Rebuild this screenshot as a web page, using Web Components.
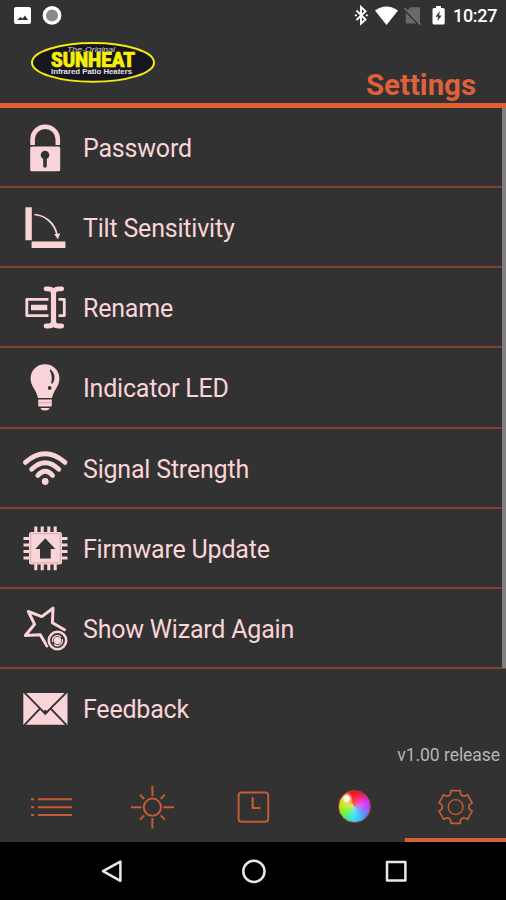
<!DOCTYPE html>
<html lang="en">
<head>
<meta charset="utf-8">
<title>Settings</title>
<style>
  body {
    margin: 0;
    background: #323232;
    font-family: Roboto, sans-serif;
  }
</style>
</head>
<body>
<settings-app></settings-app>

<script>
class StatusBar extends HTMLElement {
  constructor() {
    super();
    this.attachShadow({ mode: "open" });
  }

  connectedCallback() {
    this.shadowRoot.innerHTML = `
      <style>
        :host {
          display: flex;
          justify-content: space-between;
          height: 32px;
          color: #fff;
        }
        .right { display: flex; }
        .time {
          box-sizing: border-box;
          width: 53px;
          padding-top: 5px;
          font-size: 18px;
          line-height: 22px;
          font-weight: 500;
          letter-spacing: -.3px;
        }
        svg { display: block; }
      </style>
      <svg width="80" height="32">
        <path fill="#fff" fill-rule="evenodd" d="M16 7H29Q31 7 31 9V22Q31 24 29 24H16Q14 24 14 22V9Q14 7 16 7ZM17 20H28L25 15.5L22.6 18.6L20.5 17Z"/>
        <circle cx="52" cy="15.4" r="7.7" fill="#8a8a8a" stroke="#fff" stroke-width="3.4"/>
      </svg>
      <div class="right">
        <svg width="103" height="32" viewBox="350 0 103 32">
          <path d="M356.5 10.5L365.5 19.5L361 23.6V7L365.5 11.2L356.5 20" fill="none" stroke="#fff" stroke-width="1.9"/>
          <path d="M354.8 15.3h2.2M365.8 15.3h2" stroke="#fff" stroke-width="1.8"/>
          <path d="M375 10.6Q386.3 2.2 398 10.6L386.5 25Z" fill="#fff"/>
          <path d="M420 7.3V23L407.5 10.5L410.5 7.3ZM405.8 12.8L416.5 23.5H405.8Z" fill="#696969"/>
          <path d="M404.5 8L420.5 24.5" stroke="#777" stroke-width="1.4"/>
          <path d="M436 6H441V8H443.2Q444.7 8 444.7 9.5V23Q444.7 24.5 443.2 24.5H434Q432.5 24.5 432.5 23V9.5Q432.5 8 434 8H436Z" fill="#fff"/>
          <path d="M440 11L435.5 16.7H438.2L437.3 21L441.8 15.4H439Z" fill="#333"/>
        </svg>
        <div class="time">10:27</div>
      </div>
    `;
  }
}

class AppHeader extends HTMLElement {
  constructor() {
    super();
    this.attachShadow({ mode: "open" });
  }

  connectedCallback() {
    this.shadowRoot.innerHTML = `
      <style>
        :host {
          display: flex;
          justify-content: space-between;
          box-sizing: border-box;
          height: 76px;
          padding: 0 30px 0 28px;
          border-bottom: 5px solid #e2602f;
        }
        svg {
          display: block;
          margin-top: 7px;
        }
        h1 {
          margin: 36px 0 0;
          color: #df6039;
          font-size: 29.4px;
          line-height: 34px;
          font-weight: 700;
        }
      </style>
      <svg width="130" height="46" viewBox="28 39 130 46">
        <ellipse cx="93" cy="62.4" rx="61" ry="19.4" fill="#171520" stroke="#f2ea12" stroke-width="2"/>
        <text x="67" y="52.4" textLength="48" lengthAdjust="spacingAndGlyphs" fill="#d0d0d0" font-family="Liberation Sans" font-style="italic" font-size="7.5">The-Original</text>
        <text x="51" y="67.2" textLength="84" lengthAdjust="spacingAndGlyphs" fill="#f7ef08" stroke="#f7ef08" stroke-width=".7" font-family="Roboto" font-weight="900" font-size="19.5">SUNHEAT</text>
        <text x="51" y="74" textLength="81" lengthAdjust="spacingAndGlyphs" fill="#e4e4e4" font-family="Liberation Sans" font-weight="700" font-size="7.6">Infrared Patio Heaters</text>
      </svg>
      <h1><slot></slot></h1>
    `;
  }
}

class SettingsRow extends HTMLElement {
  constructor() {
    super();
    this.attachShadow({ mode: "open" });
  }

  connectedCallback() {
    this.shadowRoot.innerHTML = `
      <style>
        :host {
          display: flex;
          align-items: center;
          gap: 14px;
          box-sizing: border-box;
          height: 80.15px;
          padding: 2px 0 0 21px;
          border-bottom: 2px solid #80432f;
          color: #fad4d8;
          font-size: 25px;
          line-height: 30px;
          letter-spacing: -.2px;
        }
        :host([last]) { border-color: transparent; }
        span { padding-top: 2px; }
        ::slotted(svg) {
          display: block;
          flex: none;
          width: 48px;
          height: 48px;
          overflow: visible;
        }
      </style>
      <slot name="icon"></slot>
      <span><slot></slot></span>
    `;
  }
}

class NavTab extends HTMLElement {
  constructor() {
    super();
    this.attachShadow({ mode: "open" });
  }

  connectedCallback() {
    this.shadowRoot.innerHTML = `
      <style>
        :host {
          display: flex;
          justify-content: center;
          box-sizing: border-box;
          flex: 1;
          padding-top: 11px;
          border-bottom: 4px solid transparent;
        }
        :host([active]) { border-color: #d95f38; }
        ::slotted(*) {
          display: block;
          width: 48px;
          height: 48px;
        }
      </style>
      <slot></slot>
    `;
  }
}

class ColorBall extends HTMLElement {
  constructor() {
    super();
    this.attachShadow({ mode: "open" });
  }

  connectedCallback() {
    this.shadowRoot.innerHTML = `
      <style>
        :host { display: block; }
        .ball {
          box-sizing: border-box;
          width: 33px;
          height: 33px;
          margin: 7px 8px;
          border: 1px solid #a8482c;
          border-radius: 50%;
          background:
            radial-gradient(circle at 25% 24%, #fff 0 6%, rgba(255,255,255,0) 17%),
            radial-gradient(circle, rgba(255,255,255,.35), rgba(255,255,255,0) 65%),
            conic-gradient(#f01018, #f0186a 35deg, #e028f0 65deg, #a84cff 100deg, #38a0ff 135deg, #30dcff 180deg, #3cee90 215deg, #80f020 245deg, #d0e818 285deg, #f09820 315deg, #f01818 345deg, #f01018);
        }
      </style>
      <div class="ball"></div>
    `;
  }
}

class SystemNav extends HTMLElement {
  constructor() {
    super();
    this.attachShadow({ mode: "open" });
  }

  connectedCallback() {
    this.shadowRoot.innerHTML = `
      <style>
        :host {
          display: block;
          height: 58px;
          background: #000;
        }
        svg { display: block; }
      </style>
      <svg width="506" height="58" fill="none" stroke="#e8e8e8" stroke-width="2.5" stroke-linejoin="round">
        <path d="M120.4 19.6V38.8L103 29.2Z"/>
        <circle cx="253.9" cy="29.4" r="10.6"/>
        <rect x="387" y="20" width="18.4" height="18.4"/>
      </svg>
    `;
  }
}

class SettingsApp extends HTMLElement {
  constructor() {
    super();
    this.attachShadow({ mode: "open" });
  }

  connectedCallback() {
    this.shadowRoot.innerHTML = `
      <style>
        :host {
          display: flex;
          flex-direction: column;
          width: 506px;
          height: 900px;
          overflow: hidden;
          background: #323232;
        }
        status-bar, app-header, nav, system-nav { flex: none; }
        .list {
          position: relative;
          flex: 1;
        }
        .thumb {
          position: absolute;
          top: 0;
          right: 0;
          width: 4px;
          height: 560px;
          background: #808080;
        }
        .version {
          height: 22px;
          margin-top: -5px;
          padding-right: 6px;
          color: #b6b6b6;
          font-size: 17.5px;
          letter-spacing: -.05px;
          line-height: 22px;
          text-align: right;
        }
        nav {
          display: flex;
          height: 70px;
        }
      </style>
      <status-bar></status-bar>
      <app-header>Settings</app-header>
      <div class="list">
        <settings-row>
          <svg slot="icon" viewBox="0 0 48 48">
            <path d="M11.6 21V15.3A12.6 12.6 0 0 1 36.8 15.3V21" fill="none" stroke="#fad4d8" stroke-width="4.6"/>
            <rect x="9.2" y="22.6" width="30" height="24.6" rx="1.5" fill="#fad4d8"/>
            <circle cx="24" cy="31" r="4.3" fill="#323232"/>
            <path d="M24 31V42" stroke="#323232" stroke-width="3.6" stroke-linecap="round"/>
          </svg>
          Password
        </settings-row>
        <settings-row>
          <svg slot="icon" viewBox="0 0 48 48" fill="#fad4d8">
            <path d="M4.4 3.3h6.4v33H4.4zM10.6 37.6h33.8v6.4H10.6z"/>
            <path d="M13.5 10.5C25 11.5 33.5 19.5 36 30.5" fill="none" stroke="#fad4d8" stroke-width="1.7"/>
            <path d="M33.2 30L39.3 29.5L36.8 35.2Z"/>
          </svg>
          Tilt Sensitivity
        </settings-row>
        <settings-row>
          <svg slot="icon" viewBox="0 0 48 48" fill="none" stroke="#fad4d8" stroke-width="2.8" stroke-linejoin="round">
            <path d="M27.5 15.3H5.8V31.7H27.5M37.5 15.3H43.3V31.7H37.5"/>
            <path d="M10 23.5H26.3" stroke-width="5.5"/>
            <path d="M32.5 8V39" stroke-width="5.2"/>
            <path d="M25 4.8H27.5Q32.5 4.8 32.5 9.3Q32.5 4.8 37.5 4.8H40.7M25 42H27.5Q32.5 42 32.5 37.5Q32.5 42 37.5 42H40.7" stroke-width="4.8" stroke-linecap="round"/>
          </svg>
          Rename
        </settings-row>
        <settings-row>
          <svg slot="icon" viewBox="0 0 48 48" fill="#fad4d8">
            <path d="M24 .2C32.5 .2 38.4 6.5 38.4 14.5C38.4 22.5 33.3 24.5 31 34H17C14.8 24.5 9.6 22.5 9.6 14.5C9.6 6.5 15.5 .2 24 .2Z"/>
            <path d="M17.2 35.4H30.8V41.2Q30.8 42.4 29.5 42.4H18.5Q17.2 42.4 17.2 41.2Z"/>
            <path d="M19.5 44H28.5Q28 46.5 24 46.5Q20 46.5 19.5 44Z"/>
            <path d="M17.5 38.8H30.5" stroke="#b9989c" stroke-width=".8"/>
            <path d="M29.5 6.3Q35.4 12.5 31 19Q32.5 12 29.5 6.3Z" fill="#323232" stroke="#323232" stroke-width="1.5" stroke-linejoin="round"/>
            <circle cx="28.7" cy="23.9" r="1.9" fill="#323232"/>
          </svg>
          Indicator LED
        </settings-row>
        <settings-row>
          <svg slot="icon" viewBox="0 0 48 48" fill="none" stroke="#fad4d8" stroke-width="4.8" stroke-linecap="round">
            <path d="M4.4 17.4Q24 .2 44 17.4M10.6 24.3Q24.2 11.2 37.8 24.3M16.8 30.5Q24.2 22 31.6 30.5"/>
            <circle cx="24.2" cy="36.5" r="3.4" fill="#fad4d8" stroke="none"/>
          </svg>
          Signal Strength
        </settings-row>
        <settings-row>
          <svg slot="icon" viewBox="0 0 48 48">
            <path d="M14.8 1.6V45.2M21.2 1.6V45.2M27.8 1.6V45.2M34.2 1.6V45.2M2.5 13.5H46.5M2.5 20H46.5M2.5 26.5H46.5M2.5 33H46.5" stroke="#fad4d8" stroke-width="3.1"/>
            <rect x="8" y="7" width="33" height="32.6" rx="2.5" fill="#fad4d8"/>
            <rect x="9.7" y="8.7" width="29.6" height="29.2" rx="1.5" fill="none" stroke="#c9a5a9" stroke-width=".9"/>
            <path d="M24.3 13.2L34.3 24H29.7V33.6H19V24H14.3Z" fill="#323232"/>
          </svg>
          Firmware Update
        </settings-row>
        <settings-row>
          <svg slot="icon" viewBox="0 0 48 48" fill="none" stroke="#fad4d8" stroke-width="3" stroke-linejoin="round" stroke-linecap="round">
            <path d="M26 41L19.3 29.8L4.3 30.5L13.6 19.3L7.3 6.5L20.8 11.6L32 3.2L31.4 17.8L43.5 24.8"/>
            <circle cx="36.5" cy="35.5" r="10.8" fill="#323232" stroke="none"/>
            <circle cx="36.5" cy="35.5" r="8.7" stroke-width="2.6"/>
            <circle cx="36.5" cy="35.5" r="3.8" fill="#fad4d8" stroke="none"/>
            <path d="M31.6 36.5A5 5 0 0 1 39.8 31.7M41.4 34.7A5 5 0 0 1 33.2 39.4" stroke-width="1.3"/>
          </svg>
          Show Wizard Again
        </settings-row>
        <settings-row last>
          <svg slot="icon" viewBox="0 0 48 48">
            <path d="M2.3 8.1H46.5V39.7H2.3Z" fill="#fad4d8"/>
            <path d="M3.5 7.7L20.5 24.8L24.3 28.8L28.1 24.8L45.3 7.7M3.3 40.2L18.7 23.8M45.5 40.2L30 23.8" fill="none" stroke="#323232" stroke-width="1.9"/>
            <path d="M20 24L22.3 26.2L24.3 24.8L26.3 26.2L28.6 24L24.3 29Z" fill="#323232"/>
          </svg>
          Feedback
        </settings-row>
        <div class="version">v1.00 release</div>
        <div class="thumb"></div>
      </div>
      <nav>
        <nav-tab>
          <svg viewBox="0 0 48 48" stroke="#c65b37" stroke-width="2">
            <path d="M10.7 16.2H45M10.7 24.2H45M10.7 32H45M4 16.2H7M4 24.2H7M4 32H7"/>
          </svg>
        </nav-tab>
        <nav-tab>
          <svg viewBox="0 0 48 48" fill="none" stroke="#c65b37" stroke-width="2">
            <circle cx="24.4" cy="24.2" r="8.6"/>
            <path d="M24.4 3V13.2M24.4 35V45.4M3 24.2H13.4M35.4 24.2H46M12 11.8L16.2 16M36.8 11.8L32.6 16M12 36.6L16.2 32.4M36.8 36.6L32.6 32.4"/>
          </svg>
        </nav-tab>
        <nav-tab>
          <svg viewBox="0 0 48 48" fill="none" stroke="#c65b37" stroke-width="2">
            <rect x="9.6" y="9.6" width="29.6" height="29.2" rx="3"/>
            <path d="M23.7 14V25H31.5" stroke-width="2.2"/>
          </svg>
        </nav-tab>
        <nav-tab><color-ball></color-ball></nav-tab>
        <nav-tab active>
          <svg viewBox="0 0 48 48" fill="none" stroke="#c65b37" stroke-width="1.7" stroke-linejoin="round">
            <path id="gear"/>
            <circle cx="24.6" cy="24" r="7.4" stroke-width="1.4"/>
          </svg>
        </nav-tab>
      </nav>
      <system-nav></system-nav>
    `;

    // six teeth with rounded notches between them
    const cx = 24.6, cy = 24;
    const point = (r, deg) => {
      const a = deg * Math.PI / 180;
      return `${(cx + r * Math.sin(a)).toFixed(2)} ${(cy - r * Math.cos(a)).toFixed(2)}`;
    };
    let d = "";
    for (let a = 0; a < 360; a += 60) {
      d += `${a ? "L" : "M"}${point(17.1, a - 16)}L${point(17.1, a + 16)}`;
      d += `L${point(14.6, a + 19)}Q${point(12, a + 30)} ${point(14.6, a + 41)}`;
    }
    this.shadowRoot.querySelector("#gear").setAttribute("d", d + "Z");
  }
}

customElements.define("status-bar", StatusBar);
customElements.define("app-header", AppHeader);
customElements.define("settings-row", SettingsRow);
customElements.define("nav-tab", NavTab);
customElements.define("color-ball", ColorBall);
customElements.define("system-nav", SystemNav);
customElements.define("settings-app", SettingsApp);
</script>
</body>
</html>
